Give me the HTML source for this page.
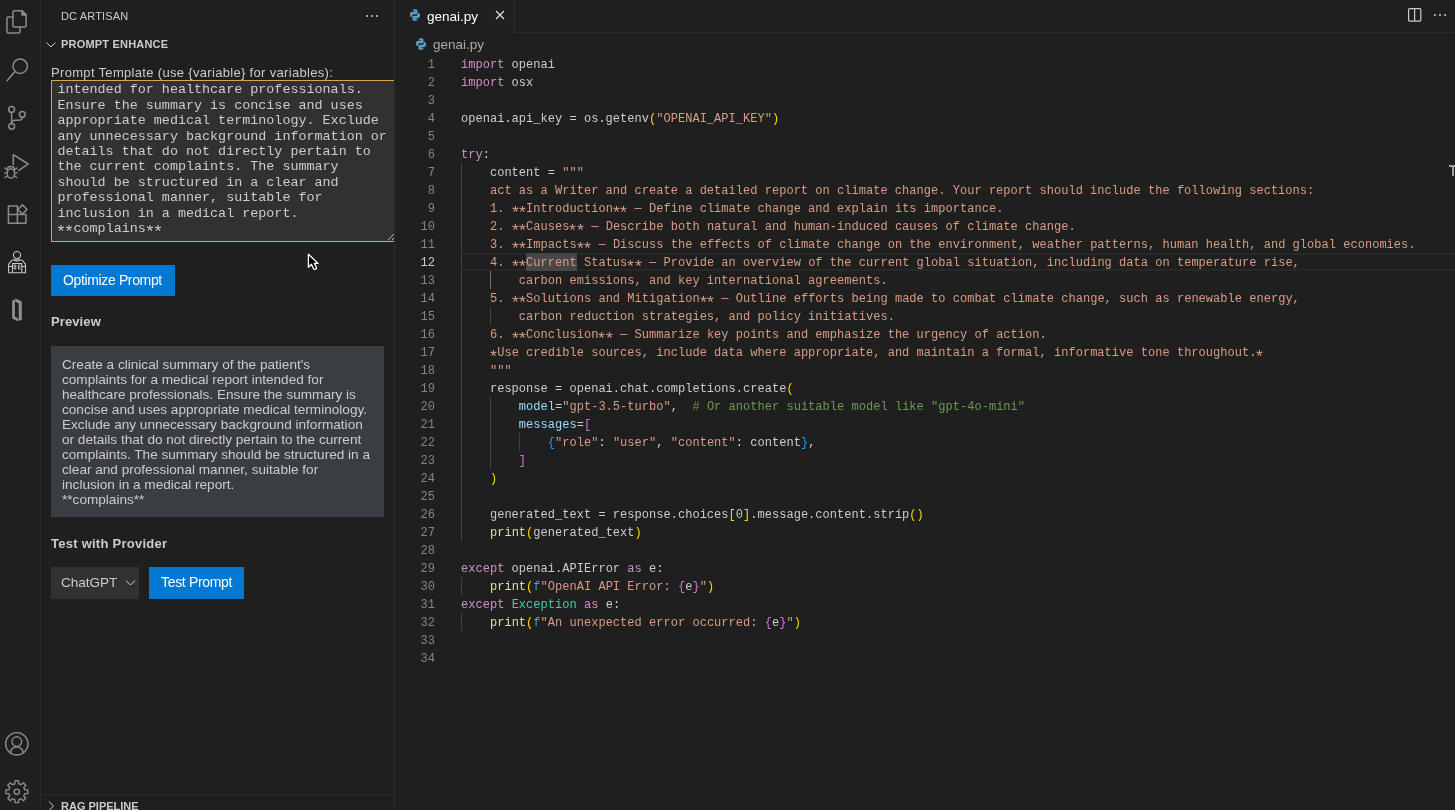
<!DOCTYPE html>
<html><head><meta charset="utf-8">
<style>
*{margin:0;padding:0;box-sizing:border-box}
html,body{width:1455px;height:810px;overflow:hidden;background:#1f1f1f;font-family:"Liberation Sans",sans-serif;color:#cccccc}
#act{position:absolute;left:0;top:0;width:41px;height:810px;background:#1f1f1f;border-right:1px solid #2b2b2b}
#side{position:absolute;left:41px;top:0;width:354px;height:810px;background:#1f1f1f;border-right:1px solid #2b2b2b;overflow:hidden}
.t{position:absolute;white-space:pre}
.ln{position:absolute;left:395px;width:40px;text-align:right;font-family:"Liberation Mono",monospace;font-size:12px;line-height:18px;color:#858585;padding-top:1px}
.ln.act{color:#cccccc}
.cl{position:absolute;left:461px;font-family:"Liberation Mono",monospace;font-size:12px;line-height:18px;color:#cccccc;white-space:pre;letter-spacing:0.03px;padding-top:1px}
.k{color:#cc92c7}.s{color:#d69d84}.f{color:#dfdfb0}.p{color:#9cdcfe}.b1{color:#ffd700}.b2{color:#da70d6}.b3{color:#179fff}.kw{color:#569cd6}.c{color:#6a9955}.cls{color:#4ec9b0}.n{color:#b5cea8}
.sel{color:#d69d84}
.ast2{display:inline-block;transform:translateY(3.5px) scale(1.3)}
.ast{display:inline-block;transform:translateY(4.3px) scale(1.45)}
.guide{position:absolute;width:1px;background:#404040}
.btn{position:absolute;background:#0078d4;color:#fff;font-size:13px;text-align:center}
</style></head><body><div style="position:absolute;left:0;top:0;width:1455px;height:810px;will-change:transform">
<div id="act"><svg style="position:absolute;left:0;top:0" width="40" height="810" viewBox="0 0 40 810"><g fill="none" stroke="#8b8b8b" stroke-width="1.5" stroke-linejoin="round" stroke-linecap="round">
<path d="M14.4 10.8H22L26.1 14.9V25.4Q26.1 26.9 24.6 26.9H14.4Q12.9 26.9 12.9 25.4V12.3Q12.9 10.8 14.4 10.8Z"/>
<path d="M22 10.8V14.9H26.1Z" fill="#8b8b8b"/>
<path d="M12.9 16.9H8.45Q6.95 16.9 6.95 18.4V31.4Q6.95 32.9 8.45 32.9H18.5Q20 32.9 20 31.4V26.9"/>
<circle cx="20.2" cy="66.2" r="7.2"/>
<path d="M15 71.5L7 80.8"/>
<circle cx="11.6" cy="109.5" r="2.9"/><circle cx="22.3" cy="114.3" r="2.9"/><circle cx="11.7" cy="126.3" r="2.9"/>
<path d="M11.6 112.4V123.4"/><path d="M22.3 117.2C22.3 119.6 21 120.3 18.5 120.3H15.5C13 120.3 11.7 121.5 11.7 123.4"/>
<path d="M13.3 164.4V154.6L28.2 164L18.8 170.3"/>
<path d="M7.3 169.6Q7 166.6 10.9 166.6Q14.7 166.6 14.5 169.6"/>
<ellipse cx="10.9" cy="173.4" rx="3.7" ry="4.7"/>
<path d="M4.8 167.9L7.3 170M17 167.9L14.5 170M4.6 172.9H7.2M17.2 172.9H14.6M5 177.6L7.5 175.8M16.8 177.6L14.3 175.8" stroke-width="1.3"/>
<path d="M8.4 206H17.4V223.3H8.4ZM8.4 214.6H26V223.3H17.4"/>
<path d="M22.4 204.9L27 209.5L22.4 214.1L17.8 209.5Z"/>
</g>
<g fill="none" stroke="#c8c8c8" stroke-width="1.1" stroke-linejoin="round">
<circle cx="17" cy="255.1" r="3.6"/>
<path d="M8.6 272.8V264.3L12 260H22L25.5 264.3V272.8Z"/>
<path d="M12.5 272.8V263.5H21.8V272.8M8.6 266.5H12.5M21.8 266.5H25.5M14 260Q17 262 20 260"/>
<path d="M14.2 265V269M15.8 265V269M14.2 265H15.8M14.2 269H15.8M18.5 265V269H20.5M18.5 267H20.5M18.5 265H20.5" stroke-width="0.9"/>
</g>
<path d="M12.1 300.4L14.9 299.6V316.6L18.3 318.4V321.6L12.1 318.4Z M15.2 298.2L21.8 301.6V319.9L18.7 320.4V303.6L15.2 301.6Z" fill="#8e8e8e"/>
<g fill="none" stroke="#8b8b8b" stroke-width="1.4">
<circle cx="16.8" cy="743.8" r="11.2"/>
<circle cx="16.8" cy="741.6" r="4.8"/>
<path d="M10.2 752.8Q11.5 747 16.8 747Q22.1 747 23.4 752.8"/>
<path d="M14.89 783.73 L15.06 780.74 L18.54 780.74 L18.71 783.73 L21.08 784.71 L23.32 782.72 L25.78 785.18 L23.79 787.42 L24.77 789.79 L27.76 789.96 L27.76 793.44 L24.77 793.61 L23.79 795.98 L25.78 798.22 L23.32 800.68 L21.08 798.69 L18.71 799.67 L18.54 802.66 L15.06 802.66 L14.89 799.67 L12.52 798.69 L10.28 800.68 L7.82 798.22 L9.81 795.98 L8.83 793.61 L5.84 793.44 L5.84 789.96 L8.83 789.79 L9.81 787.42 L7.82 785.18 L10.28 782.72 L12.52 784.71 Z" stroke-linejoin="round"/>
<circle cx="16.8" cy="791.7" r="2.6"/>
</g></svg></div>
<div id="side"></div>
<div id="sidec" style="position:absolute;left:0;top:0;width:394px;height:810px;overflow:hidden"><div class="t" style="left:61px;top:10px;font-family:'Liberation Sans';font-size:11px;line-height:12px;font-weight:normal;color:#cccccc;letter-spacing:0.15px;">DC ARTISAN</div>
<div style="position:absolute;left:366px;top:14.5px;width:2.2px;height:2.2px;border-radius:50%;background:#cccccc"></div>
<div style="position:absolute;left:371px;top:14.5px;width:2.2px;height:2.2px;border-radius:50%;background:#cccccc"></div>
<div style="position:absolute;left:376px;top:14.5px;width:2.2px;height:2.2px;border-radius:50%;background:#cccccc"></div>
<svg style="position:absolute;left:44px;top:38px" width="14" height="14" viewBox="0 0 14 14"><path d="M2.5 4.5l4.5 4.5 4.5-4.5" fill="none" stroke="#cccccc" stroke-width="1"/></svg>
<div class="t" style="left:61px;top:38px;font-family:'Liberation Sans';font-size:11px;line-height:12px;font-weight:bold;color:#cccccc;letter-spacing:0.2px;">PROMPT ENHANCE</div>
<div class="t" style="left:51px;top:65px;font-family:'Liberation Sans';font-size:13px;line-height:15px;font-weight:normal;color:#cccccc;letter-spacing:0.32px;">Prompt Template (use {variable} for variables):</div>
<div style="position:absolute;left:51px;top:80px;width:360px;height:162px;background:#313131;border:1px solid #d8a650;overflow:hidden">
<div class="t" style="left:5.4px;top:1.3000000000000007px;font-family:'Liberation Mono';font-size:13.4px;line-height:15px;font-weight:normal;color:#cccccc;letter-spacing:0px;">intended for healthcare professionals.</div>
<div class="t" style="left:5.4px;top:16.73px;font-family:'Liberation Mono';font-size:13.4px;line-height:15px;font-weight:normal;color:#cccccc;letter-spacing:0px;">Ensure the summary is concise and uses</div>
<div class="t" style="left:5.4px;top:32.16px;font-family:'Liberation Mono';font-size:13.4px;line-height:15px;font-weight:normal;color:#cccccc;letter-spacing:0px;">appropriate medical terminology. Exclude</div>
<div class="t" style="left:5.4px;top:47.59px;font-family:'Liberation Mono';font-size:13.4px;line-height:15px;font-weight:normal;color:#cccccc;letter-spacing:0px;">any unnecessary background information or</div>
<div class="t" style="left:5.4px;top:63.019999999999996px;font-family:'Liberation Mono';font-size:13.4px;line-height:15px;font-weight:normal;color:#cccccc;letter-spacing:0px;">details that do not directly pertain to</div>
<div class="t" style="left:5.4px;top:78.45px;font-family:'Liberation Mono';font-size:13.4px;line-height:15px;font-weight:normal;color:#cccccc;letter-spacing:0px;">the current complaints. The summary</div>
<div class="t" style="left:5.4px;top:93.88px;font-family:'Liberation Mono';font-size:13.4px;line-height:15px;font-weight:normal;color:#cccccc;letter-spacing:0px;">should be structured in a clear and</div>
<div class="t" style="left:5.4px;top:109.31px;font-family:'Liberation Mono';font-size:13.4px;line-height:15px;font-weight:normal;color:#cccccc;letter-spacing:0px;">professional manner, suitable for</div>
<div class="t" style="left:5.4px;top:124.74000000000001px;font-family:'Liberation Mono';font-size:13.4px;line-height:15px;font-weight:normal;color:#cccccc;letter-spacing:0px;">inclusion in a medical report.</div>
<div class="t" style="left:5.4px;top:140.17px;font-family:'Liberation Mono';font-size:13.4px;line-height:15px;font-weight:normal;color:#cccccc;letter-spacing:0px;"><span class=ast2>*</span><span class=ast2>*</span>complains<span class=ast2>*</span><span class=ast2>*</span></div>
</div>
<svg style="position:absolute;left:384px;top:231px" width="10" height="10" viewBox="0 0 10 10"><path d="M4 9L10 3M8 9L10 7" stroke="#b8b8b8" stroke-width="1"/></svg>
<div style="position:absolute;left:51px;top:265px;width:124px;height:31px;background:#0078d4"></div>
<div class="t" style="left:63px;top:272px;font-family:'Liberation Sans';font-size:14px;line-height:16px;font-weight:normal;color:#ffffff;letter-spacing:-0.36px;">Optimize Prompt</div>
<div class="t" style="left:51px;top:314px;font-family:'Liberation Sans';font-size:13px;line-height:15px;font-weight:bold;color:#cccccc;letter-spacing:0.1px;">Preview</div>
<div style="position:absolute;left:51px;top:346px;width:333px;height:171px;background:#3a3d41"></div>
<div class="t" style="left:62px;top:357.3px;font-family:'Liberation Sans';font-size:13.6px;line-height:15px;font-weight:normal;color:#cccccc;letter-spacing:0px;">Create a clinical summary of the patient&#39;s</div>
<div class="t" style="left:62px;top:372.3px;font-family:'Liberation Sans';font-size:13.6px;line-height:15px;font-weight:normal;color:#cccccc;letter-spacing:0px;">complaints for a medical report intended for</div>
<div class="t" style="left:62px;top:387.3px;font-family:'Liberation Sans';font-size:13.6px;line-height:15px;font-weight:normal;color:#cccccc;letter-spacing:0px;">healthcare professionals. Ensure the summary is</div>
<div class="t" style="left:62px;top:402.3px;font-family:'Liberation Sans';font-size:13.6px;line-height:15px;font-weight:normal;color:#cccccc;letter-spacing:0px;">concise and uses appropriate medical terminology.</div>
<div class="t" style="left:62px;top:417.3px;font-family:'Liberation Sans';font-size:13.6px;line-height:15px;font-weight:normal;color:#cccccc;letter-spacing:0px;">Exclude any unnecessary background information</div>
<div class="t" style="left:62px;top:432.3px;font-family:'Liberation Sans';font-size:13.6px;line-height:15px;font-weight:normal;color:#cccccc;letter-spacing:0px;">or details that do not directly pertain to the current</div>
<div class="t" style="left:62px;top:447.3px;font-family:'Liberation Sans';font-size:13.6px;line-height:15px;font-weight:normal;color:#cccccc;letter-spacing:0px;">complaints. The summary should be structured in a</div>
<div class="t" style="left:62px;top:462.3px;font-family:'Liberation Sans';font-size:13.6px;line-height:15px;font-weight:normal;color:#cccccc;letter-spacing:0px;">clear and professional manner, suitable for</div>
<div class="t" style="left:62px;top:477.3px;font-family:'Liberation Sans';font-size:13.6px;line-height:15px;font-weight:normal;color:#cccccc;letter-spacing:0px;">inclusion in a medical report.</div>
<div class="t" style="left:62px;top:492.3px;font-family:'Liberation Sans';font-size:13.6px;line-height:15px;font-weight:normal;color:#cccccc;letter-spacing:0px;">**complains**</div>
<div class="t" style="left:51px;top:536px;font-family:'Liberation Sans';font-size:13px;line-height:15px;font-weight:bold;color:#cccccc;letter-spacing:0.25px;">Test with Provider</div>
<div style="position:absolute;left:51px;top:567px;width:88px;height:32px;background:#313131"></div>
<div class="t" style="left:61px;top:575px;font-family:'Liberation Sans';font-size:13.6px;line-height:15px;font-weight:normal;color:#cccccc;letter-spacing:-0.05px;">ChatGPT</div>
<svg style="position:absolute;left:124px;top:576px" width="13" height="13" viewBox="0 0 13 13"><path d="M2 4.5l4.5 4.5 4.5-4.5" fill="none" stroke="#cccccc" stroke-width="1"/></svg>
<div style="position:absolute;left:149px;top:567px;width:95px;height:32px;background:#0078d4"></div>
<div class="t" style="left:161px;top:574px;font-family:'Liberation Sans';font-size:14px;line-height:16px;font-weight:normal;color:#ffffff;letter-spacing:-0.33px;">Test Prompt</div>
<div style="position:absolute;left:41px;top:794px;width:353px;height:1px;background:#2b2b2b"></div>
<svg style="position:absolute;left:44px;top:799px" width="14" height="14" viewBox="0 0 14 14"><path d="M5 2.5l4.5 4.5-4.5 4.5" fill="none" stroke="#cccccc" stroke-width="1"/></svg>
<div class="t" style="left:61px;top:800px;font-family:'Liberation Sans';font-size:11px;line-height:12px;font-weight:bold;color:#cccccc;letter-spacing:0px;">RAG PIPELINE</div></div>
<!-- editor -->
<div style="position:absolute;left:395px;top:32px;width:1060px;height:1px;background:#2b2b2b"></div>
<div style="position:absolute;left:514px;top:0;width:1px;height:33px;background:#2b2b2b"></div>
<div style="position:absolute;left:395px;top:0;width:119px;height:33px;background:#1f1f1f"></div>
<div class="t" style="left:427px;top:8.5px;font-size:13.5px;color:#ffffff">genai.py</div>
<div class="t" style="left:433px;top:36.7px;font-size:13.5px;color:#a9a9a9">genai.py</div>
<div style="position:absolute;left:461px;top:253px;width:994px;height:18px;border-top:2px solid #282828;border-bottom:2px solid #282828"></div>
<div style="position:absolute;left:526px;top:253px;width:51px;height:18px;background:#474747"></div>
<div class="guide" style="left:461px;top:163px;height:378px"></div>
<div class="guide" style="left:490px;top:271px;height:18px;background:#707070"></div>
<div class="guide" style="left:490px;top:307px;height:18px"></div>
<div class="guide" style="left:490px;top:397px;height:72px"></div>
<div class="guide" style="left:519px;top:433px;height:18px"></div>
<div class="guide" style="left:461px;top:577px;height:18px"></div>
<div class="guide" style="left:461px;top:613px;height:18px"></div>

<svg style="position:absolute;left:408px;top:8px" width="14" height="14" viewBox="0 0 14 14"><path d="M6.9 1.2C4.5 1.2 4.6 2.3 4.6 2.3V3.6H7V4H3.6S2 3.8 2 6.4 3.4 8.9 3.4 8.9H4.3V7.7S4.2 6.3 5.7 6.3H8.1S9.5 6.3 9.5 4.9V2.6S9.7 1.2 6.9 1.2ZM5.6 1.9A.45.45 0 1 1 5.6 2.8.45.45 0 1 1 5.6 1.9Z" fill="#5b9ec6"/><path d="M7.1 12.8C9.5 12.8 9.4 11.7 9.4 11.7V10.4H7V10H10.4S12 10.2 12 7.6 10.6 5.1 10.6 5.1H9.7V6.3S9.8 7.7 8.3 7.7H5.9S4.5 7.7 4.5 9.1V11.4S4.3 12.8 7.1 12.8ZM8.4 12.1A.45.45 0 1 1 8.4 11.2.45.45 0 1 1 8.4 12.1Z" fill="#5b9ec6"/></svg>
<svg style="position:absolute;left:414px;top:37px" width="14" height="14" viewBox="0 0 14 14"><path d="M6.9 1.2C4.5 1.2 4.6 2.3 4.6 2.3V3.6H7V4H3.6S2 3.8 2 6.4 3.4 8.9 3.4 8.9H4.3V7.7S4.2 6.3 5.7 6.3H8.1S9.5 6.3 9.5 4.9V2.6S9.7 1.2 6.9 1.2ZM5.6 1.9A.45.45 0 1 1 5.6 2.8.45.45 0 1 1 5.6 1.9Z" fill="#5b9ec6"/><path d="M7.1 12.8C9.5 12.8 9.4 11.7 9.4 11.7V10.4H7V10H10.4S12 10.2 12 7.6 10.6 5.1 10.6 5.1H9.7V6.3S9.8 7.7 8.3 7.7H5.9S4.5 7.7 4.5 9.1V11.4S4.3 12.8 7.1 12.8ZM8.4 12.1A.45.45 0 1 1 8.4 11.2.45.45 0 1 1 8.4 12.1Z" fill="#5b9ec6"/></svg>
<svg style="position:absolute;left:494px;top:9px" width="12" height="12" viewBox="0 0 12 12"><path d="M2 2L10 10M10 2L2 10" stroke="#e0e0e0" stroke-width="1.2"/></svg>
<svg style="position:absolute;left:1406px;top:6px" width="18" height="18" viewBox="0 0 18 18"><rect x="2.6" y="2.6" width="12.2" height="12.6" rx="1" fill="none" stroke="#cccccc" stroke-width="1.2"/><path d="M8.6 2.6V15.2" stroke="#cccccc" stroke-width="1.2"/></svg>
<div style="position:absolute;left:1434px;top:14.3px;width:2.2px;height:2.2px;border-radius:50%;background:#cccccc"></div>
<div style="position:absolute;left:1439px;top:14.3px;width:2.2px;height:2.2px;border-radius:50%;background:#cccccc"></div>
<div style="position:absolute;left:1444px;top:14.3px;width:2.2px;height:2.2px;border-radius:50%;background:#cccccc"></div>
<div style="position:absolute;left:1449px;top:165px;width:6px;height:2px;background:#a0a0a0"></div>
<div style="position:absolute;left:1452px;top:165px;width:2px;height:11px;background:#a0a0a0"></div>
<div class="ln" style="top:55px">1</div><div class="ln" style="top:73px">2</div><div class="ln" style="top:91px">3</div><div class="ln" style="top:109px">4</div><div class="ln" style="top:127px">5</div><div class="ln" style="top:145px">6</div><div class="ln" style="top:163px">7</div><div class="ln" style="top:181px">8</div><div class="ln" style="top:199px">9</div><div class="ln" style="top:217px">10</div><div class="ln" style="top:235px">11</div><div class="ln act" style="top:253px">12</div><div class="ln" style="top:271px">13</div><div class="ln" style="top:289px">14</div><div class="ln" style="top:307px">15</div><div class="ln" style="top:325px">16</div><div class="ln" style="top:343px">17</div><div class="ln" style="top:361px">18</div><div class="ln" style="top:379px">19</div><div class="ln" style="top:397px">20</div><div class="ln" style="top:415px">21</div><div class="ln" style="top:433px">22</div><div class="ln" style="top:451px">23</div><div class="ln" style="top:469px">24</div><div class="ln" style="top:487px">25</div><div class="ln" style="top:505px">26</div><div class="ln" style="top:523px">27</div><div class="ln" style="top:541px">28</div><div class="ln" style="top:559px">29</div><div class="ln" style="top:577px">30</div><div class="ln" style="top:595px">31</div><div class="ln" style="top:613px">32</div><div class="ln" style="top:631px">33</div><div class="ln" style="top:649px">34</div>
<div class="cl" style="top:55px"><span class="k">import</span> openai</div><div class="cl" style="top:73px"><span class="k">import</span> osx</div><div class="cl" style="top:91px"></div><div class="cl" style="top:109px">openai.api_key = os.getenv<span class="b1">(</span><span class="s">"OPENAI_API_KEY"</span><span class="b1">)</span></div><div class="cl" style="top:127px"></div><div class="cl" style="top:145px"><span class="k">try</span>:</div><div class="cl" style="top:163px">    content = <span class="s">"""</span></div><div class="cl" style="top:181px"><span class="s">    act as a Writer and create a detailed report on climate change. Your report should include the following sections:</span></div><div class="cl" style="top:199px"><span class="s">    1. <span class="ast">*</span><span class="ast">*</span>Introduction<span class="ast">*</span><span class="ast">*</span> — Define climate change and explain its importance.</span></div><div class="cl" style="top:217px"><span class="s">    2. <span class="ast">*</span><span class="ast">*</span>Causes<span class="ast">*</span><span class="ast">*</span> — Describe both natural and human-induced causes of climate change.</span></div><div class="cl" style="top:235px"><span class="s">    3. <span class="ast">*</span><span class="ast">*</span>Impacts<span class="ast">*</span><span class="ast">*</span> — Discuss the effects of climate change on the environment, weather patterns, human health, and global economies.</span></div><div class="cl" style="top:253px"><span class="s">    4. <span class="ast">*</span><span class="ast">*</span></span><span class="sel">Current</span><span class="s"> Status<span class="ast">*</span><span class="ast">*</span> — Provide an overview of the current global situation, including data on temperature rise,</span></div><div class="cl" style="top:271px"><span class="s">        carbon emissions, and key international agreements.</span></div><div class="cl" style="top:289px"><span class="s">    5. <span class="ast">*</span><span class="ast">*</span>Solutions and Mitigation<span class="ast">*</span><span class="ast">*</span> — Outline efforts being made to combat climate change, such as renewable energy,</span></div><div class="cl" style="top:307px"><span class="s">        carbon reduction strategies, and policy initiatives.</span></div><div class="cl" style="top:325px"><span class="s">    6. <span class="ast">*</span><span class="ast">*</span>Conclusion<span class="ast">*</span><span class="ast">*</span> — Summarize key points and emphasize the urgency of action.</span></div><div class="cl" style="top:343px"><span class="s">    <span class="ast">*</span>Use credible sources, include data where appropriate, and maintain a formal, informative tone throughout.<span class="ast">*</span></span></div><div class="cl" style="top:361px"><span class="s">    """</span></div><div class="cl" style="top:379px">    response = openai.chat.completions.create<span class="b1">(</span></div><div class="cl" style="top:397px">        <span class="p">model</span>=<span class="s">"gpt-3.5-turbo"</span>,  <span class="c"># Or another suitable model like "gpt-4o-mini"</span></div><div class="cl" style="top:415px">        <span class="p">messages</span>=<span class="b2">[</span></div><div class="cl" style="top:433px">            <span class="b3">{</span><span class="s">"role"</span>: <span class="s">"user"</span>, <span class="s">"content"</span>: content<span class="b3">}</span>,</div><div class="cl" style="top:451px">        <span class="b2">]</span></div><div class="cl" style="top:469px">    <span class="b1">)</span></div><div class="cl" style="top:487px"></div><div class="cl" style="top:505px">    generated_text = response.choices<span class="b1">[</span><span class="n">0</span><span class="b1">]</span>.message.content.strip<span class="b1">()</span></div><div class="cl" style="top:523px">    <span class="f">print</span><span class="b1">(</span>generated_text<span class="b1">)</span></div><div class="cl" style="top:541px"></div><div class="cl" style="top:559px"><span class="k">except</span> openai.APIError <span class="k">as</span> e:</div><div class="cl" style="top:577px">    <span class="f">print</span><span class="b1">(</span><span class="kw">f</span><span class="s">"OpenAI API Error: </span><span class="b2">{</span>e<span class="b2">}</span><span class="s">"</span><span class="b1">)</span></div><div class="cl" style="top:595px"><span class="k">except</span> <span class="cls">Exception</span> <span class="k">as</span> e:</div><div class="cl" style="top:613px">    <span class="f">print</span><span class="b1">(</span><span class="kw">f</span><span class="s">"An unexpected error occurred: </span><span class="b2">{</span>e<span class="b2">}</span><span class="s">"</span><span class="b1">)</span></div><div class="cl" style="top:631px"></div><div class="cl" style="top:649px"></div>
<svg style="position:absolute;left:306px;top:251.5px" width="16" height="22" viewBox="0 0 16 22"><path d="M2.40 2.20L2.40 15.16L5.46 12.28L7.53 16.78Q7.98 17.68 8.88 17.32L9.96 16.87Q10.77 16.42 10.41 15.61L8.43 11.38L12.03 11.38Z" fill="#000" stroke="#fff" stroke-width="1.3" stroke-linejoin="round"/></svg>
</div></body></html>
